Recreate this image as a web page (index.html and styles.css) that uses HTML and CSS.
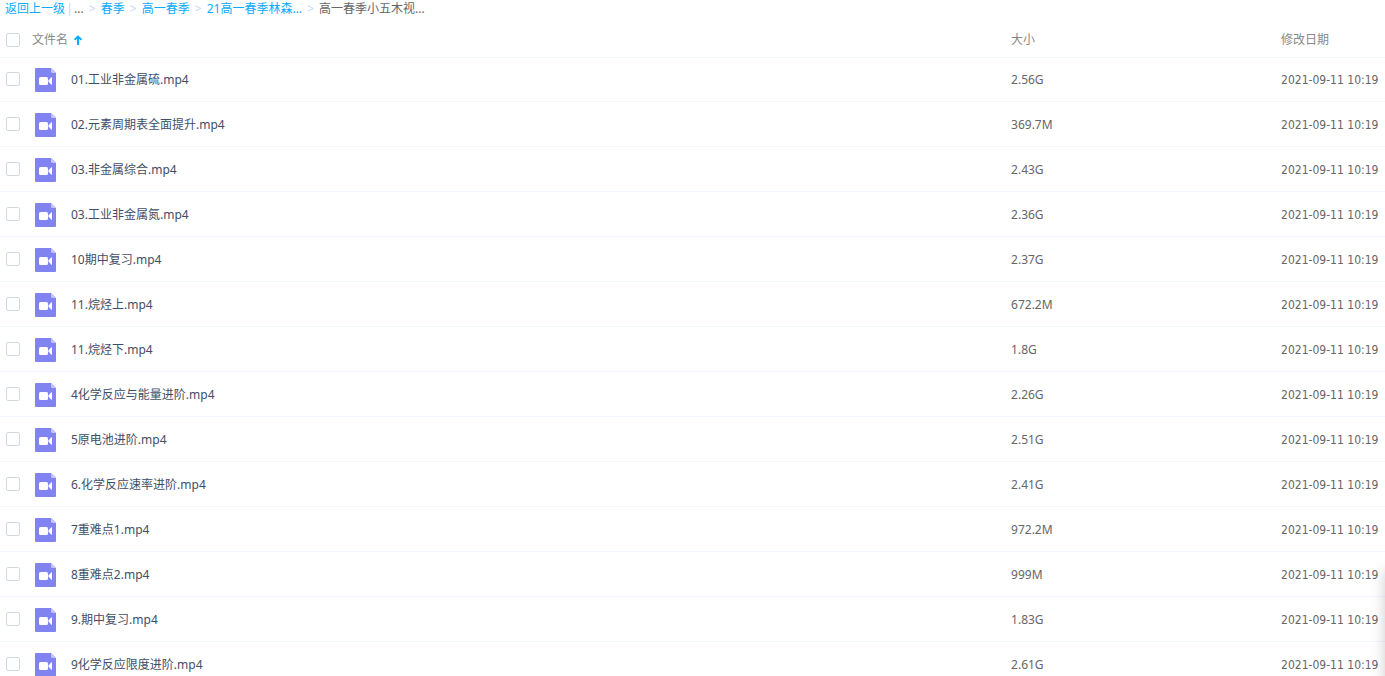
FILE: index.html
```html
<!DOCTYPE html>
<html lang="zh-CN">
<head>
<meta charset="utf-8">
<title>文件列表</title>
<link rel="stylesheet" href="styles.css">
</head>
<body>
<svg class="sprite" aria-hidden="true">
  <symbol id="video" viewBox="0 0 21 24">
    <path fill="#8183f1" d="M1 0H16L21 5V23a1 1 0 0 1-1 1H1a1 1 0 0 1-1-1V1a1 1 0 0 1 1-1z"/>
    <path fill="#c3c4fa" d="M16 0L21 5H17.500a1.500 1.500 0 0 1-1.500-1.500z"/>
    <rect fill="#fff" x="4" y="9" width="9" height="8" rx="1.500"/>
    <path fill="#fff" d="M13.500 12.500L16 9.500q1-.8 1 .3v6.400q0 1.100-1 .3L13.500 13.500z"/>
  </symbol>
</svg>
<main class="files">
  <nav class="crumbs" aria-label="路径">
    <a href="#">返回上一级</a><span class="bar">|</span><span class="dots">...</span>
    <span class="sep">&gt;</span><a href="#">春季</a>
    <span class="sep">&gt;</span><a href="#">高一春季</a>
    <span class="sep">&gt;</span><a href="#">21高一春季林森...</a>
    <span class="sep">&gt;</span><span>高一春季小五木视...</span>
  </nav>
  <table class="list">
    <thead>
      <tr>
        <th class="name-col"><div class="cell"><input type="checkbox" aria-label="全选"><span class="title">文件名</span><svg class="sort" viewBox="0 0 8 10" aria-hidden="true"><path d="M4 10V1.500M.5 4.800L4 1.500l3.500 3.300" fill="none" stroke="#09aaff" stroke-width="2"/></svg></div></th>
        <th class="size-col">大小</th>
        <th class="date-col">修改日期</th>
      </tr>
    </thead>
    <tbody>
      <tr><td><label class="cell"><input type="checkbox"><svg class="icon"><use href="#video"/></svg><span>01.工业非金属硫.mp4</span></label></td><td>2.56G</td><td class="date">2021-09-11 10:19</td></tr>
      <tr><td><label class="cell"><input type="checkbox"><svg class="icon"><use href="#video"/></svg><span>02.元素周期表全面提升.mp4</span></label></td><td>369.7M</td><td class="date">2021-09-11 10:19</td></tr>
      <tr><td><label class="cell"><input type="checkbox"><svg class="icon"><use href="#video"/></svg><span>03.非金属综合.mp4</span></label></td><td>2.43G</td><td class="date">2021-09-11 10:19</td></tr>
      <tr><td><label class="cell"><input type="checkbox"><svg class="icon"><use href="#video"/></svg><span>03.工业非金属氮.mp4</span></label></td><td>2.36G</td><td class="date">2021-09-11 10:19</td></tr>
      <tr><td><label class="cell"><input type="checkbox"><svg class="icon"><use href="#video"/></svg><span>10期中复习.mp4</span></label></td><td>2.37G</td><td class="date">2021-09-11 10:19</td></tr>
      <tr><td><label class="cell"><input type="checkbox"><svg class="icon"><use href="#video"/></svg><span>11.烷烃上.mp4</span></label></td><td>672.2M</td><td class="date">2021-09-11 10:19</td></tr>
      <tr><td><label class="cell"><input type="checkbox"><svg class="icon"><use href="#video"/></svg><span>11.烷烃下.mp4</span></label></td><td>1.8G</td><td class="date">2021-09-11 10:19</td></tr>
      <tr><td><label class="cell"><input type="checkbox"><svg class="icon"><use href="#video"/></svg><span>4化学反应与能量进阶.mp4</span></label></td><td>2.26G</td><td class="date">2021-09-11 10:19</td></tr>
      <tr><td><label class="cell"><input type="checkbox"><svg class="icon"><use href="#video"/></svg><span>5原电池进阶.mp4</span></label></td><td>2.51G</td><td class="date">2021-09-11 10:19</td></tr>
      <tr><td><label class="cell"><input type="checkbox"><svg class="icon"><use href="#video"/></svg><span>6.化学反应速率进阶.mp4</span></label></td><td>2.41G</td><td class="date">2021-09-11 10:19</td></tr>
      <tr><td><label class="cell"><input type="checkbox"><svg class="icon"><use href="#video"/></svg><span>7重难点1.mp4</span></label></td><td>972.2M</td><td class="date">2021-09-11 10:19</td></tr>
      <tr><td><label class="cell"><input type="checkbox"><svg class="icon"><use href="#video"/></svg><span>8重难点2.mp4</span></label></td><td>999M</td><td class="date">2021-09-11 10:19</td></tr>
      <tr><td><label class="cell"><input type="checkbox"><svg class="icon"><use href="#video"/></svg><span>9.期中复习.mp4</span></label></td><td>1.83G</td><td class="date">2021-09-11 10:19</td></tr>
      <tr><td><label class="cell"><input type="checkbox"><svg class="icon"><use href="#video"/></svg><span>9化学反应限度进阶.mp4</span></label></td><td>2.61G</td><td class="date">2021-09-11 10:19</td></tr>
    </tbody>
  </table>
</main>
<div class="drawer" aria-hidden="true"></div>
</body>
</html>
```

FILE: styles.css
```css
* { box-sizing: border-box; }

body {
  margin: 0;
  height: 100vh;
  overflow: hidden;
  background: #fff;
  color: #666;
  font: 12px/16px "Noto Sans", "Noto Sans CJK SC", sans-serif;
}

.sprite { display: none; }

.crumbs {
  display: flex;
  height: 20px;
  padding: 1px 0 0 5px;
  white-space: nowrap;
}

.crumbs a { color: #09aaff; text-decoration: none; }
.crumbs .bar { width: 9px; text-align: center; color: #c4d8f6; }
.crumbs .sep { width: 17px; text-align: center; color: #c4d8f6; }

.list {
  width: 100%;
  border-collapse: separate;
  border-spacing: 0;
  table-layout: fixed;
}

.name-col { width: 73%; }
.size-col { width: 19.5%; }
.date-col { width: 7.5%; }

th, td {
  height: 45px;
  padding: 2px 0 0;
  border-bottom: 1px solid #f2f6fd;
  text-align: left;
  vertical-align: middle;
  white-space: nowrap;
}

th { height: 38px; color: #888; font-weight: 400; }
tbody tr:first-child td { height: 44px; padding-top: 0; }

.cell {
  display: flex;
  align-items: center;
  padding-left: 6px;
  color: #424e67;
}

th .cell { color: #888; }

input {
  appearance: none;
  flex: none;
  width: 14px;
  height: 14px;
  margin: 0;
  border: 1px solid #d3d9e2;
  border-radius: 2px;
  background: #fff;
}

td input { margin-bottom: 2px; }
input:checked { background: #09aaff; }

.title { margin-left: 12px; }
.sort { width: 8px; height: 10px; margin-left: 6px; }
.icon { flex: none; width: 21px; height: 24px; margin: 0 15px; }

.date { font-family: "DejaVu Sans Condensed", "DejaVu Sans", sans-serif; }

.drawer {
  position: fixed;
  top: 570px;
  bottom: -20px;
  left: 100%;
  width: 200px;
  box-shadow: 0 0 14px rgba(0, 0, 0, 0.2);
}
```
